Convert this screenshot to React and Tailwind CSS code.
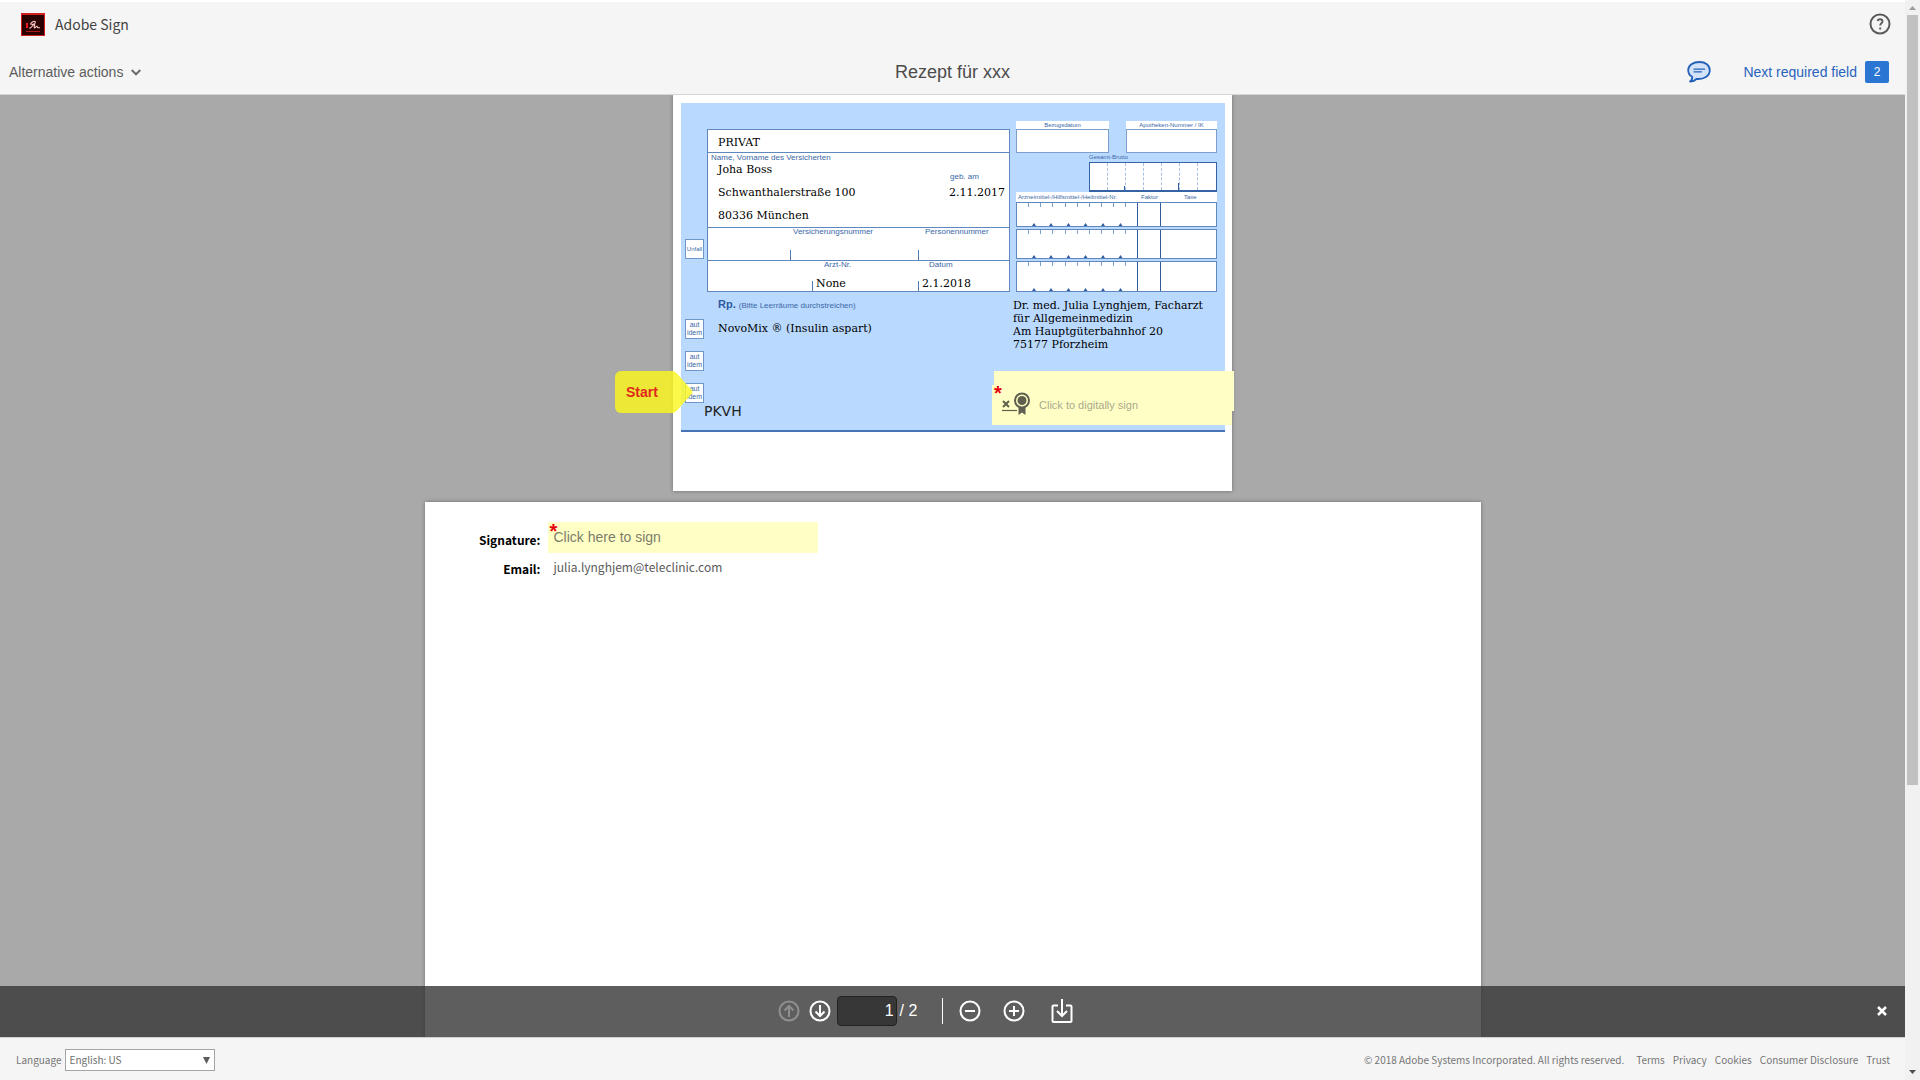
import React, { useState } from 'react';

const footerLinks = ['Terms', 'Privacy', 'Cookies', 'Consumer Disclosure', 'Trust'];

// Small printed captions on the prescription form
function Caption({ children, className = '' }) {
  return <span className={`text-[8px] leading-2 whitespace-nowrap text-[#3a68a5] ${className}`}>{children}</span>;
}

// Values filled in by the doctor
function Value({ children, className = '' }) {
  return <span className={`font-['DejaVu_Serif',serif] text-[11px] leading-3 whitespace-nowrap text-black ${className}`}>{children}</span>;
}

function Tick() {
  return <span className="h-[10px] w-px shrink-0 self-end bg-[#4f7ab3]" />;
}

function SideBox({ children, className = '' }) {
  return (
    <div className={`flex h-5 w-[19px] items-center justify-center border border-[#6f96c9] bg-white text-center text-[#3a68a5] ${className}`}>
      {children}
    </div>
  );
}

function Header() {
  return (
    <header className="border-b border-[#d6d6d6] bg-[#f5f5f5]">
      <div className="flex h-[46px] items-center justify-between border-t-2 border-white pr-[14px] pl-[21px]">
        <div className="flex items-center gap-[10px]">
          <svg width="24" height="23" viewBox="0 0 24 23">
            <rect x="0.5" y="0.5" width="23" height="22" fill="#2b0000" stroke="#cf1f1f" />
            <rect x="0" y="0" width="24" height="2" fill="#cf1f1f" />
            <rect x="5" y="10" width="2" height="5" fill="#f01414" />
            <path d="M5 18.500h14" stroke="#b01818" />
            <path d="M9.500 11.500C10 9.500 12.500 7.800 14 8.500c1.200 1-1.500 4-5.500 7M10.500 12c2-1.500 4-1 3 1-.4 1.200-.3 2 .3 1.800 1-.3 1.500-1.800 2.200-1.500s0 1.500 1 1.500h2" fill="none" stroke="#ffc9c9" strokeWidth="1.100" />
          </svg>
          <span className="font-['Noto_Sans_CJK_SC',sans-serif] text-sm text-[#424242]">Adobe Sign</span>
        </div>
        <button type="button" aria-label="Help">
          <svg width="22" height="22" viewBox="0 0 22 22" fill="none" stroke="#5c5c5c">
            <circle cx="11" cy="11" r="9.500" strokeWidth="2" />
            <path d="M8.500 8c.3-1.200 1.200-1.700 2.500-1.700 1.500 0 2.500.8 2.500 2.100 0 1.900-2.300 1.900-2.300 4.100" strokeWidth="1.900" />
            <path d="M11.200 14.500v2" strokeWidth="2" />
          </svg>
        </button>
      </div>
      <div className="grid h-12 grid-cols-[1fr_auto_1fr] items-center px-[9px] pt-1">
        <button type="button" className="flex items-center gap-2 justify-self-start text-sm text-[#5c5c5c]">
          Alternative actions
          <svg width="10" height="7" viewBox="0 0 10 7" fill="none" stroke="#6e6e6e" strokeWidth="2">
            <path d="M.7 1 5 5.300 9.300 1" />
          </svg>
        </button>
        <h1 className="text-lg text-[#4b4b4b]">Rezept für xxx</h1>
        <div className="flex items-center justify-self-end pr-[7px]">
          <button type="button" aria-label="Comments" className="mr-8">
            <svg width="24" height="22" viewBox="0 0 24 22" fill="#d3e2f8" stroke="#2461b8" strokeWidth="1.800" strokeLinejoin="round">
              <path d="M12.500 1C6 1 1.200 4.300 1.200 9c0 3 1.500 5.500 4 6.800.2 1.900-.5 3.600-2.200 4.700 3 0 5-.9 6.500-2.600C17 18.600 22.800 15 22.800 9.300 22.800 4.300 18.500 1 12.500 1z" />
              <path d="M7 8.200h10.500M7 10.800h7.500" strokeWidth="1.200" strokeLinecap="round" />
            </svg>
          </button>
          <button type="button" className="flex items-center gap-2 text-sm text-[#2a63bd]">
            Next required field
            <span className="flex h-[22px] w-6 items-center justify-center rounded-xs bg-[#2a76d2] text-xs text-white">2</span>
          </button>
        </div>
      </div>
    </header>
  );
}

function InsuredPanel() {
  return (
    <div className="h-[163px] border border-[#5f88bf] bg-white">
      <div className="flex h-[23px] items-center border-b border-[#5f88bf] pt-[3px] pl-[10px]">
        <Value>PRIVAT</Value>
      </div>
      <div className="flex h-[75px] justify-between border-b border-[#5f88bf]">
        <div className="flex flex-col gap-[2px] pt-px pl-[3px]">
          <Caption>Name, Vorname des Versicherten</Caption>
          <div className="flex flex-col gap-[11px] pl-[7px]">
            <Value>Joha Boss</Value>
            <Value>Schwanthalerstraße 100</Value>
            <Value>80336 München</Value>
          </div>
        </div>
        <div className="flex flex-col gap-[6px] pt-5 pr-1">
          <Caption className="pl-px">geb. am</Caption>
          <Value>2.11.2017</Value>
        </div>
      </div>
      <div className="flex h-[33px] border-b border-[#5f88bf]">
        <div className="w-[82px]" />
        <div className="flex w-32 gap-[2px]">
          <Tick />
          <Caption>Versicherungsnummer</Caption>
        </div>
        <div className="flex gap-[6px]">
          <Tick />
          <Caption>Personennummer</Caption>
        </div>
      </div>
      <div className="flex h-[30px]">
        <div className="w-[104px]" />
        <div className="flex w-[106px] gap-[3px]">
          <Tick />
          <div className="flex flex-col justify-between">
            <Caption className="pl-2">Arzt-Nr.</Caption>
            <Value className="pb-px">None</Value>
          </div>
        </div>
        <div className="flex gap-[3px]">
          <Tick />
          <div className="flex flex-col justify-between">
            <Caption className="pl-[7px]">Datum</Caption>
            <Value className="pb-px">2.1.2018</Value>
          </div>
        </div>
      </div>
    </div>
  );
}

function PharmacyRow({ height }) {
  return (
    <div className={`flex border border-[#5f88bf] bg-white ${height}`}>
      <div className="flex w-[120px] flex-col justify-between">
        <svg className="ml-[11px]" width="100" height="4" viewBox="0 0 100 4" stroke="#7d9fcd">
          <path d="M.5 0v4M12.500 0v4M24.500 0v4M37.500 0v4M49.500 0v4M61.500 0v4M73.500 0v4M85.500 0v4M97.500 0v4" />
        </svg>
        <svg className="ml-[15px]" width="94" height="3" viewBox="0 0 94 3" fill="#2f5c9c">
          <path d="M0 3 2 0l2 3zM17 3l2-3 2 3zM34.500 3l2-3 2 3zM51.500 3l2-3 2 3zM69 3l2-3 2 3zM86.500 3l2-3 2 3z" />
        </svg>
      </div>
      <div className="w-6 border-x border-[#2f5c9c]" />
    </div>
  );
}

function PharmacyPanel() {
  return (
    <div className="text-[6px] text-[#3a68a5]">
      <div className="flex gap-[17px] text-center leading-2">
        <div className="w-[93px]">
          <div className="bg-white">Bezugsdatum</div>
          <div className="h-6 border border-[#7d9fcd] bg-white" />
        </div>
        <div className="w-[91px]">
          <div className="bg-white">Apotheken-Nummer / IK</div>
          <div className="h-6 border border-[#7d9fcd] bg-white" />
        </div>
      </div>
      <div className="ml-auto w-32 leading-[9px]">
        <div>Gesamt-Brutto</div>
        <div className="grid h-[30px] grid-cols-7 border border-b-2 border-[#3564a6] bg-white">
          <span className="border-r border-dashed border-[#a9bfdf]" />
          <span className="flex items-end justify-end border-r border-dashed border-[#a9bfdf]"><i className="h-1 w-px bg-[#2f5c9c]" /></span>
          <span className="border-r border-dashed border-[#a9bfdf]" />
          <span className="border-r border-dashed border-[#a9bfdf]" />
          <span className="flex items-end justify-end border-r border-dashed border-[#a9bfdf]"><i className="h-[7px] w-px bg-[#2f5c9c]" /></span>
          <span className="border-r border-dashed border-[#a9bfdf]" />
        </div>
      </div>
      <div className="flex bg-white pl-[2px] leading-[10px]">
        <span className="w-[123px] whitespace-nowrap">Arzneimittel-/Hilfsmittel-/Heilmittel-Nr.</span>
        <span className="w-[43px]">Faktor</span>
        <span>Taxe</span>
      </div>
      <div className="flex flex-col gap-[2px]">
        <PharmacyRow height="h-[25px]" />
        <PharmacyRow height="h-[30px]" />
        <PharmacyRow height="h-[31px]" />
      </div>
    </div>
  );
}

function StartTag() {
  return (
    <button type="button" className="absolute top-[276px] -left-[58px] flex h-[42px] text-sm font-bold text-[#e0281c]">
      <span className="flex h-full w-[58px] items-center rounded-l-md bg-[#f9f322]/85 pl-[11px]">Start</span>
      <svg width="20" height="42" viewBox="0 0 20 42">
        <path d="M0 0c2 .5 3 1.500 4.500 3L19 19.500q1.200 1.500 0 3L4.500 39C3 40.500 2 41.500 0 42z" fill="#fbf72a" fillOpacity=".85" />
      </svg>
    </button>
  );
}

function DigitalSignField() {
  return (
    <>
      <div className="absolute top-[276px] left-[321px] h-10 w-60 bg-[#ffffc5]" />
      <button type="button" className="absolute top-[290px] left-[319px] flex h-10 w-60 items-center gap-[9px] bg-[#ffffc5] pl-[10px] text-[11px] text-[#a9a98c]">
        <svg width="28" height="26" viewBox="0 0 28 26" fill="none" stroke="#5f5f50">
          <path d="m1 9 6 6M7 9l-6 6" strokeWidth="2" />
          <path d="M0 18.500h15" strokeWidth="1.200" />
          <circle cx="20" cy="8.500" r="7" strokeWidth="2" />
          <circle cx="20" cy="8.500" r="4.500" fill="#5f5f50" stroke="none" />
          <path d="M16.500 15v8l3.500-2.500 3.500 2.500v-8q-3.500 2-7 0z" fill="#5f5f50" stroke="none" />
        </svg>
        Click to digitally sign
      </button>
      <span className="absolute top-[288px] left-[321px] text-xl leading-5 font-bold text-red-600">*</span>
    </>
  );
}

function Prescription() {
  return (
    <section className="relative h-[396px] w-[559px] bg-white px-2 pt-2 shadow-[0_0_4px_rgba(0,0,0,0.35)]">
      <div className="flex h-[329px] w-[544px] border-b-2 border-[#4674b4] bg-[#b9d9ff] pl-1">
        <div className="w-[22px] pt-[136px]">
          <SideBox className="text-[6px]">Unfall</SideBox>
          <div className="mt-[60px] flex flex-col gap-3 text-[7px] leading-[8px]">
            <SideBox>aut<br />idem</SideBox>
            <SideBox>aut<br />idem</SideBox>
            <SideBox>aut<br />idem</SideBox>
          </div>
        </div>
        <div className="flex w-[303px] flex-col pt-[26px]">
          <InsuredPanel />
          <div className="flex items-baseline gap-[3px] pt-1 pl-[11px]">
            <span className="text-[11px] leading-4 font-bold text-[#2c5aa0]">Rp.</span>
            <Caption>(Bitte Leerräume durchstreichen)</Caption>
          </div>
          <Value className="pt-[11px] pl-[11px]">NovoMix ® (Insulin aspart)</Value>
          <span className="mt-auto -ml-[3px] pb-[11px] font-['DejaVu_Sans',sans-serif] text-sm leading-4 text-[#222]">PKVH</span>
        </div>
        <div className="ml-[6px] w-[201px] pt-[18px]">
          <PharmacyPanel />
          <address className="-ml-[3px] pt-[7px] font-['DejaVu_Serif',serif] text-[11px] leading-[13px] whitespace-nowrap text-black not-italic">
            Dr. med. Julia Lynghjem, Facharzt<br />
            für Allgemeinmedizin<br />
            Am Hauptgüterbahnhof 20<br />
            75177 Pforzheim
          </address>
        </div>
      </div>
      <StartTag />
      <DigitalSignField />
    </section>
  );
}

function SignaturePage() {
  return (
    <section className="min-h-[1000px] w-[1056px] bg-white pt-5 pl-9 shadow-[0_0_4px_rgba(0,0,0,0.35)]">
      <div className="grid grid-cols-[80px_270px] gap-x-[7px] font-['Noto_Sans_CJK_SC',sans-serif]">
        <label htmlFor="signature" className="pt-[2px] text-right text-xs leading-[32px] font-bold text-black">Signature:</label>
        <div className="relative h-[31px]">
          <input
            id="signature"
            type="text"
            placeholder="Click here to sign"
            className="h-[31px] w-full bg-[#ffffc5] pb-[2px] pl-[6px] font-['Liberation_Sans',Arial,sans-serif] text-sm placeholder:text-[#7c7c6c]"
          />
          <span className="absolute -top-px left-[2px] font-['Liberation_Sans',Arial,sans-serif] text-xl leading-5 font-bold text-red-600">*</span>
        </div>
        <span className="text-right text-xs leading-[26px] font-bold text-black">Email:</span>
        <span className="pl-[6px] text-xs leading-[22px] text-[#5a5a5a]">julia.lynghjem@teleclinic.com</span>
      </div>
    </section>
  );
}

function Toolbar() {
  const [page, setPage] = useState('1');

  return (
    <div className="absolute inset-x-0 bottom-0 grid h-[51px] grid-cols-[1fr_auto_1fr] items-center bg-[#363636]/80 px-4 pb-px text-white">
      <div />
      <div className="flex items-center pr-[54px]">
        <button type="button" aria-label="Previous page" disabled className="opacity-30">
          <svg width="22" height="22" viewBox="0 0 22 22" fill="none" stroke="currentColor" strokeWidth="2">
            <circle cx="11" cy="11" r="9.500" />
            <path d="M11 17V6M6.500 10.500 11 6l4.500 4.500" />
          </svg>
        </button>
        <button type="button" aria-label="Next page" className="ml-[9px]">
          <svg width="22" height="22" viewBox="0 0 22 22" fill="none" stroke="currentColor" strokeWidth="2">
            <circle cx="11" cy="11" r="9.500" />
            <path d="M11 5v11M6.500 11.500 11 16l4.500-4.500" />
          </svg>
        </button>
        <input
          aria-label="Page number"
          value={page}
          onChange={(e) => setPage(e.target.value)}
          className="ml-[6px] h-[30px] w-[60px] rounded-sm border border-[#222] bg-[#373737] pr-[2px] pb-px text-right text-base"
        />
        <span className="ml-[3px] pb-px text-base">/ 2</span>
        <span className="ml-[25px] h-[26px] w-px bg-white" />
        <button type="button" aria-label="Zoom out" className="ml-4">
          <svg width="22" height="22" viewBox="0 0 22 22" fill="none" stroke="currentColor" strokeWidth="2">
            <circle cx="11" cy="11" r="9.500" />
            <path d="M6 11h10" />
          </svg>
        </button>
        <button type="button" aria-label="Zoom in" className="ml-[22px]">
          <svg width="22" height="22" viewBox="0 0 22 22" fill="none" stroke="currentColor" strokeWidth="2">
            <circle cx="11" cy="11" r="9.500" />
            <path d="M6 11h10M11 6v10" />
          </svg>
        </button>
        <button type="button" aria-label="Download" className="ml-[26px]">
          <svg width="22" height="26" viewBox="0 0 22 26" fill="none" stroke="currentColor" strokeWidth="2">
            <path d="M7 7.500H2.500a1 1 0 0 0-1 1V23a1 1 0 0 0 1 1h17a1 1 0 0 0 1-1V8.500a1 1 0 0 0-1-1H15" />
            <path d="M11 1v17M6 13l5 5 5-5" />
          </svg>
        </button>
      </div>
      <button type="button" aria-label="Close toolbar" className="justify-self-end pr-[2px]">
        <svg width="10" height="10" viewBox="0 0 10 10" stroke="currentColor" strokeWidth="2.500">
          <path d="m1 1 8 8M9 1 1 9" />
        </svg>
      </button>
    </div>
  );
}

function Footer() {
  return (
    <footer className="flex h-[43px] items-center justify-between border-t border-[#d0d0d0] bg-[#f5f5f5] pr-[15px] pl-4 font-['Noto_Sans_CJK_SC',sans-serif] text-[10px] text-[#757575]">
      <div className="flex items-center gap-[3px]">
        <label htmlFor="language">Language</label>
        <div className="relative pt-px">
          <select id="language" className="h-[22px] w-[150px] appearance-none border border-[#a5a5a5] bg-white pl-1 text-[#6e6e6e]">
            <option>English: US</option>
          </select>
          <svg className="pointer-events-none absolute top-[9px] right-[5px]" width="7" height="7" viewBox="0 0 7 7" fill="#5c5c5c">
            <path d="M0 0h7L3.500 7z" />
          </svg>
        </div>
      </div>
      <div className="flex items-center">
        <span className="mr-3">© 2018 Adobe Systems Incorporated. All rights reserved.</span>
        <nav className="flex gap-2">
          {footerLinks.map((link) => (
            <a key={link} href="#">{link}</a>
          ))}
        </nav>
      </div>
    </footer>
  );
}

// Window scrollbar on the right edge
function Scrollbar() {
  return (
    <div className="flex w-[15px] shrink-0 flex-col items-center bg-[#f1f1f1] py-[6px]">
      <svg width="7" height="4" viewBox="0 0 7 4" fill="#9c9c9c"><path d="M0 4 3.500 0 7 4z" /></svg>
      <div className="mt-[5px] flex w-[11px] flex-1 flex-col">
        <div className="h-[73%] bg-[#c1c1c1]" />
      </div>
      <svg width="7" height="4" viewBox="0 0 7 4" fill="#505050"><path d="M0 0h7L3.500 4z" /></svg>
    </div>
  );
}

function App() {
  return (
    <div className="flex h-screen font-['Liberation_Sans',Arial,sans-serif]">
      <div className="flex min-w-0 flex-1 flex-col">
        <Header />
        <main className="relative min-h-0 flex-1 overflow-hidden bg-[#a9a9a9]">
          <div className="flex flex-col items-center gap-[11px]">
            <Prescription />
            <SignaturePage />
          </div>
          <Toolbar />
        </main>
        <Footer />
      </div>
      <Scrollbar />
    </div>
  );
}

export default App;
